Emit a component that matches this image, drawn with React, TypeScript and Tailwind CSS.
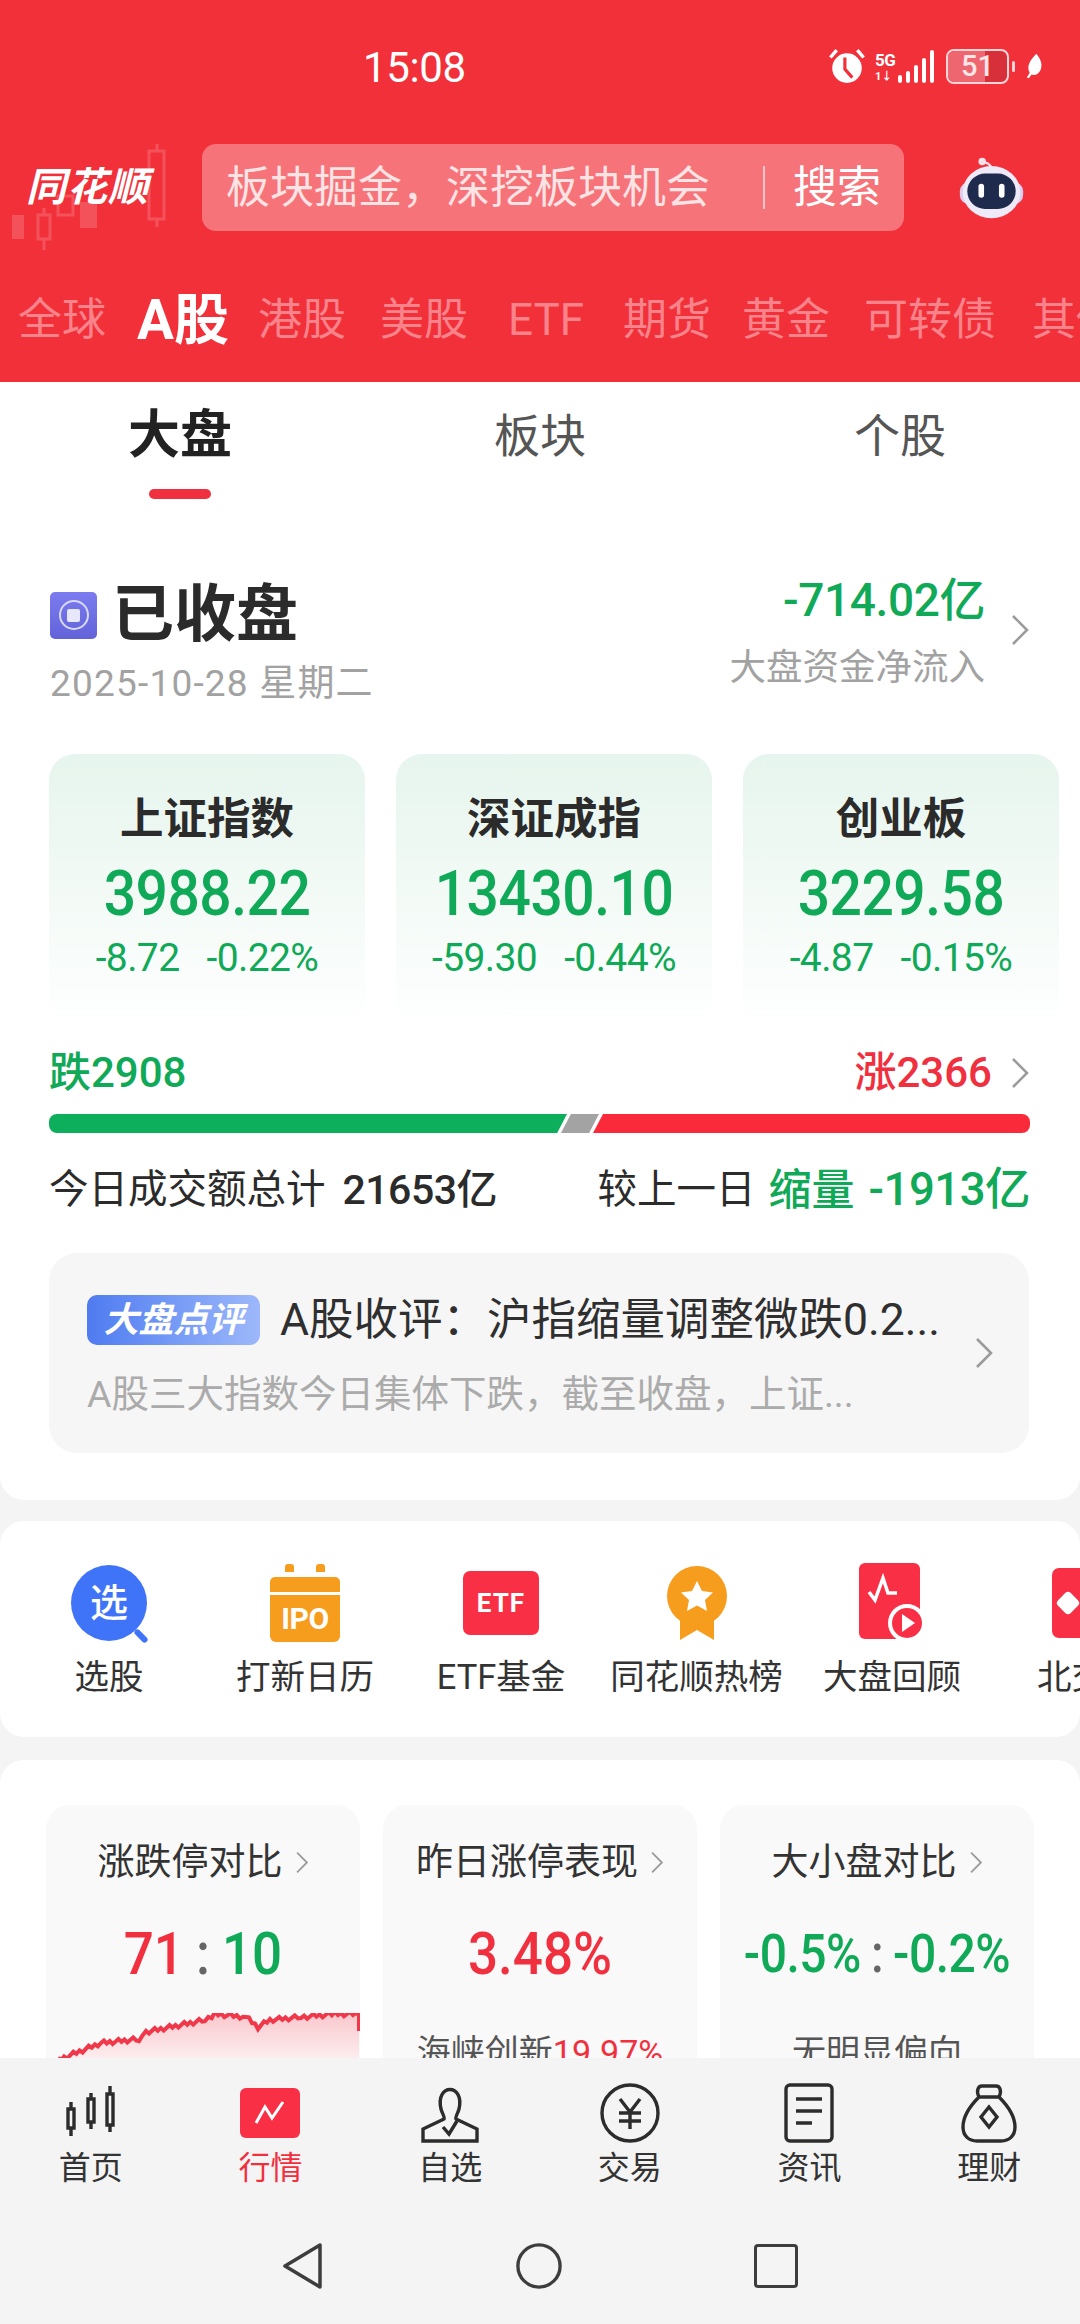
import type { ReactNode } from "react";

const FONT = "font-['Roboto','Noto_Sans_CJK_SC',sans-serif]";

const INDEXES = [
  { name: "上证指数", value: "3988.22", change: "-8.72", pct: "-0.22%" },
  { name: "深证成指", value: "13430.10", change: "-59.30", pct: "-0.44%" },
  { name: "创业板", value: "3229.58", change: "-4.87", pct: "-0.15%" },
];

function Chevron({ className = "" }: { className?: string }) {
  return (
    <svg viewBox="0 0 20 32" fill="none" stroke="#9b9b9b" strokeWidth="2.6" className={className}>
      <path d="M3 2l14 14L3 30" />
    </svg>
  );
}

function StatusIcons() {
  return (
    <div className="ml-auto mr-[37px] flex items-center">
      <svg viewBox="0 0 36 36" className="h-[38px] w-[38px]" fill="#fff">
        <circle cx="18" cy="20" r="14" />
        <path d="M1 9l6-7 2.500 2-6 7zM35 9l-6-7-2.500 2 6 7z" />
        <path d="M16 10v11l7 8" stroke="#f1303a" strokeWidth="3" fill="none" />
      </svg>
      <div className="ml-[9px] flex h-[33px] w-[23px] flex-col text-white">
        <span className="text-[17px] leading-[20px] font-bold tracking-[-0.5px]">5G</span>
        <span className="text-[11px] leading-[13px] font-bold">1↓</span>
      </div>
      <div className="flex h-[33px] items-end gap-[4px]">
        <span className="h-[8px] w-[4px] rounded-full bg-white" />
        <span className="h-[12px] w-[4px] rounded-full bg-white" />
        <span className="h-[18px] w-[4px] rounded-full bg-white" />
        <span className="h-[25px] w-[4px] rounded-full bg-white" />
        <span className="h-[33px] w-[4px] rounded-full bg-white" />
      </div>
      <div className="relative ml-[12px] flex h-[35px] w-[63px] items-center justify-center overflow-hidden rounded-[8px] border-2 border-[#ffd5d7] bg-[#d8303a]">
        <span className="absolute inset-y-0 left-0 w-[37px] bg-[#ee6670]" />
        <span className="relative text-[29px] leading-none font-medium text-[#ffe6e7]">51</span>
      </div>
      <span className="ml-[3px] h-[11px] w-[3px] rounded-full bg-[#ffd5d7]" />
      <svg viewBox="0 0 20 28" className="ml-[9px] h-[28px] w-[19px]" fill="#fff">
        <path d="M13 1c5 6 7 12 4 18-2 4-6 5-9 4l-3 4-2-1 3-5C2 14 7 7 13 1z" />
      </svg>
    </div>
  );
}

function Logo() {
  return (
    <div className="relative h-full w-[202px] shrink-0">
      <svg viewBox="0 0 170 110" className="absolute top-0 left-0 h-[110px] w-[170px]" fill="none" stroke="#f4525b" strokeWidth="3">
        <path d="M157 0v8M157 75v8M149 7h15v68h-15z" />
        <path d="M44 64v7M44 95v11M38 71h12v24H38z" />
        <path d="M58 52h15v19H58z" />
        <path d="M80 58h17v26H80zM12 71h12v24H12z" fill="#f4525b" stroke="none" />
      </svg>
      <span className="absolute top-[21px] left-[26px] text-[40px] leading-[46px] font-bold tracking-[1px] text-white italic">
        同花顺
      </span>
    </div>
  );
}

function Robot() {
  return (
    <svg viewBox="0 0 72 72" className="ml-[54px] h-[67px] w-[67px] shrink-0">
      <path d="M36 18c0-6-3-8-7-9" fill="none" stroke="#f4d8e0" strokeWidth="2.5" />
      <circle cx="26" cy="8" r="4" fill="#f5e3e8" />
      <rect x="2" y="30" width="68" height="24" rx="10" fill="#d9cff0" />
      <ellipse cx="36" cy="41" rx="31" ry="28" fill="#efeaf8" />
      <rect x="10" y="21" width="52" height="38" rx="19" fill="#1f2b4d" />
      <rect x="22" y="32" width="6" height="15" rx="3" fill="#fff" />
      <rect x="44" y="32" width="6" height="15" rx="3" fill="#fff" />
    </svg>
  );
}

function Header() {
  return (
    <header className="flex h-[382px] shrink-0 flex-col overflow-hidden bg-[#f1303a]">
      <div className="flex h-[132px] shrink-0 items-center text-white">
        <span className="mt-[3px] ml-[363px] text-[42px] leading-none tracking-[-0.4px]">15:08</span>
        <StatusIcons />
      </div>
      <div className="mt-[12px] flex h-[87px] shrink-0 items-center">
        <Logo />
        <div className="flex h-[87px] w-[702px] shrink-0 items-center rounded-[14px] bg-[#f6737a] pr-[23px] pl-[24px] text-[44px] leading-none text-[#fde3e4]">
          <span>板块掘金，深挖板块机会</span>
          <span className="ml-auto h-[43px] w-[2px] bg-[#fbc5c8]" />
          <span className="ml-[28px] text-white">搜索</span>
        </div>
        <Robot />
      </div>
      <nav className="mt-[57px] flex h-[64px] shrink-0 items-center whitespace-nowrap text-[44px] leading-none text-[#f8838a]">
        <span className="ml-[18px] w-[88px] shrink-0">全球</span>
        <span className="ml-[31px] w-[94px] shrink-0 text-[55px] font-bold text-white">A股</span>
        <span className="ml-[27px] shrink-0">港股</span>
        <span className="ml-[34px] shrink-0">美股</span>
        <span className="ml-[40px] shrink-0">ETF</span>
        <span className="ml-[39px] shrink-0">期货</span>
        <span className="ml-[31px] shrink-0">黄金</span>
        <span className="ml-[34px] shrink-0">可转债</span>
        <span className="ml-[36px] shrink-0">其他</span>
      </nav>
    </header>
  );
}

function IndexCard({ name, value, change, pct }: (typeof INDEXES)[number]) {
  return (
    <div className="flex h-[276px] w-[316px] flex-col items-center rounded-[26px] bg-gradient-to-b from-[#e6f5ed] to-[#ffffff] pt-[41px]">
      <div className="text-[43.5px] leading-[50px] font-bold text-[#2b2b2b]">{name}</div>
      <div className="mt-[19px] origin-center scale-y-[1.12] text-[57px] leading-[60px] font-medium tracking-[-0.5px] text-[#0fa958]">
        {value}
      </div>
      <div className="mt-[14px] flex gap-[27px] text-[39px] leading-[40px] tracking-[-0.6px] text-[#0fa958]">
        <span>{change}</span>
        <span>{pct}</span>
      </div>
    </div>
  );
}

function AdvanceBar() {
  return (
    <div className="mt-[21px] flex h-[19px] w-[981px]">
      <div className="h-full w-[518px] shrink-0 rounded-l-[8px] bg-[#0daf5c] [clip-path:polygon(0_0,100%_0,98.1%_100%,0_100%)]" />
      <div className="-ml-[6px] h-full w-[38px] shrink-0 bg-[#a3a3a3] [clip-path:polygon(26%_0,100%_0,74%_100%,0_100%)]" />
      <div className="-ml-[6px] h-full flex-1 rounded-r-[8px] bg-[#fb2a3a] [clip-path:polygon(10px_0,100%_0,100%_100%,0_100%)]" />
    </div>
  );
}

function MarketCard() {
  return (
    <section className="h-[1118px] shrink-0 rounded-b-[24px] bg-white">
      <div className="grid h-[120px] grid-cols-3 text-[46px] leading-none text-[#555]">
        <div className="flex flex-col items-center pt-[24px]">
          <span className="flex h-[60px] items-center text-[52px] font-bold text-[#222]">大盘</span>
          <span className="mt-[23px] h-[10px] w-[62px] rounded-full bg-[#f1303f]" />
        </div>
        <div className="flex justify-center pt-[24px]">
          <span className="flex h-[60px] items-center">板块</span>
        </div>
        <div className="flex justify-center pt-[24px]">
          <span className="flex h-[60px] items-center">个股</span>
        </div>
      </div>
      <div className="pl-[49px]">
        <div className="flex h-[252px] w-[981px] items-start pt-[71px]">
          <div className="flex flex-col">
            <div className="mt-[10px] flex h-[64px] items-center">
              <div className="ml-[1px] flex h-[47px] w-[47px] items-center justify-center rounded-[5px] bg-gradient-to-b from-[#7c7cf0] to-[#6263d8]">
                <div className="flex h-[30px] w-[30px] items-center justify-center rounded-full border-2 border-[#d9d9fb]">
                  <span className="h-[13px] w-[13px] rounded-[2px] bg-[#e8e8fd]" />
                </div>
              </div>
              <span className="ml-[15px] text-[62px] leading-none font-bold text-[#2b2b2b]">已收盘</span>
            </div>
            <span className="mt-[17px] ml-[1px] text-[37px] leading-[40px] tracking-[1.2px] text-[#a2a2a2]">2025-10-28 星期二</span>
          </div>
          <div className="ml-auto flex flex-col items-end">
            <span className="mt-[1px] text-[46px] leading-[52px] font-medium tracking-[-0.4px] text-[#0fa958]">-714.02亿</span>
            <span className="mt-[21px] text-[36.5px] leading-[42px] text-[#a2a2a2]">大盘资金净流入</span>
          </div>
          <Chevron className="mt-[41px] ml-[25px] h-[32px] w-[20px] shrink-0" />
        </div>
        <div className="flex gap-[31px]">
          {INDEXES.map((item) => (
            <IndexCard key={item.name} {...item} />
          ))}
        </div>
        <div className="mt-[23px] flex h-[40px] w-[981px] items-center text-[42px] leading-none font-medium">
          <span className="text-[#0fa958]">跌2908</span>
          <span className="ml-auto text-[#f1303f]">涨2366</span>
          <Chevron className="ml-[18px] h-[32px] w-[20px] shrink-0" />
        </div>
        <AdvanceBar />
        <div className="mt-[33px] flex h-[48px] w-[981px] items-center text-[39.5px] leading-none text-[#2b2b2b]">
          <span>今日成交额总计</span>
          <span className="ml-[17px] text-[41px] font-medium tracking-[-0.5px]">21653亿</span>
          <span className="ml-auto">较上一日</span>
          <span className="ml-[13px] text-[43px] font-medium text-[#0fa958]">缩量</span>
          <span className="ml-[14px] text-[45.5px] font-medium tracking-[-0.5px] text-[#0fa958]">-1913亿</span>
        </div>
        <div className="mt-[39px] flex h-[200px] w-[980px] items-center rounded-[28px] bg-[#f6f6f6] pr-[35px] pl-[38px]">
          <div className="mt-[6px] min-w-0 flex-1">
            <div className="flex h-[50px] items-center">
              <span className="flex h-[50px] w-[173px] shrink-0 items-center justify-center rounded-[10px] bg-gradient-to-r from-[#4f7bf0] to-[#9db8fa] text-[35px] leading-none font-bold text-white italic">
                大盘点评
              </span>
              <span className="ml-[20px] text-[44.5px] leading-none whitespace-nowrap text-[#2f2f2f]">A股收评：沪指缩量调整微跌0.2...</span>
            </div>
            <div className="mt-[26px] text-[37.5px] leading-[46px] whitespace-nowrap text-[#ababab]">A股三大指数今日集体下跌，截至收盘，上证...</div>
          </div>
          <Chevron className="ml-[8px] h-[32px] w-[20px] shrink-0" />
        </div>
      </div>
    </section>
  );
}

function Shortcut({ icon, label, className }: { icon: ReactNode; label: string; className: string }) {
  return (
    <div className={`flex shrink-0 flex-col items-center ${className}`}>
      <div className="flex h-[84px] items-center justify-center">{icon}</div>
      <span className="mt-[11px] text-[34.5px] leading-[42px] whitespace-nowrap text-[#333]">{label}</span>
    </div>
  );
}

function Shortcuts() {
  return (
    <section className="mt-[21px] flex h-[216px] shrink-0 overflow-hidden rounded-[24px] bg-white pt-[40px]">
      <Shortcut
        className="ml-[13px] w-[192px]"
        label="选股"
        icon={
          <div className="relative flex h-[76px] w-[76px] items-center justify-center rounded-full bg-[#3f74f8] text-[38px] leading-none font-medium text-white">
            选<span className="absolute right-[-2px] bottom-[2px] h-[6px] w-[16px] rotate-45 rounded-full bg-[#3f74f8]" />
          </div>
        }
      />
      <Shortcut
        className="ml-[2px] w-[196px]"
        label="打新日历"
        icon={
          <div className="relative flex h-[78px] w-[70px] flex-col justify-end">
            <div className="absolute top-0 left-[15px] h-[8px] w-[9px] rounded-t-[3px] bg-[#f79d1d]" />
            <div className="absolute top-0 right-[15px] h-[8px] w-[9px] rounded-t-[3px] bg-[#f79d1d]" />
            <div className="h-[15px] shrink-0 rounded-t-[5px] bg-[#f79d1d]" />
            <div className="flex h-[50px] shrink-0 items-center justify-center rounded-b-[6px] border-t-[3px] border-white bg-[#f79d1d] text-[30px] leading-none font-bold tracking-[-0.5px] text-white">IPO</div>
          </div>
        }
      />
      <Shortcut
        className="w-[196px]"
        label="ETF基金"
        icon={
          <div className="flex h-[64px] w-[76px] items-center justify-center rounded-[7px] bg-[#f92f45] text-[26px] leading-none font-bold tracking-[1px] text-white">ETF</div>
        }
      />
      <Shortcut
        className="w-[195px]"
        label="同花顺热榜"
        icon={
          <svg viewBox="0 0 62 74" className="h-[74px] w-[62px]">
            <path d="M14 44v30l17-10 17 10V44z" fill="#f79d1d" />
            <circle cx="31" cy="30" r="30" fill="#f79d1d" />
            <path d="M31 15l5 10 11 1.500-8 7.500 2 11-10-5.500-10 5.500 2-11-8-7.500 11-1.500z" fill="#fff" />
          </svg>
        }
      />
      <Shortcut
        className="w-[196px]"
        label="大盘回顾"
        icon={
          <svg viewBox="0 0 70 80" className="h-[80px] w-[70px]">
            <rect x="2" y="0" width="61" height="76" rx="6" fill="#f92f45" />
            <path d="M12 29l6 8 8-22 5 15h9" fill="none" stroke="#fff" strokeWidth="3.500" />
            <circle cx="50" cy="60" r="19" fill="#fff" />
            <circle cx="50" cy="60" r="15" fill="#f92f45" />
            <path d="M45 51l13 9-13 9z" fill="#fff" />
          </svg>
        }
      />
      <Shortcut
        className="ml-[47px] w-[100px] items-start"
        label="北交所"
        icon={
          <div className="ml-[15px] flex h-[70px] w-[76px] items-center rounded-[7px] bg-[#f92f45] pl-[7px]">
            <span className="h-[18px] w-[18px] rotate-45 rounded-[4px] bg-white" />
          </div>
        }
      />
    </section>
  );
}

const TREND = [
  [12, 47], [55, 30], [93, 26], [100, 19], [159, 7], [169, 1], [200, 4], [212, 14], [224, 7], [255, 4], [289, 1], [313, 1],
];

function buildTrend() {
  const out: [number, number][] = [];
  for (let i = 0; i < TREND.length - 1; i++) {
    const [x0, y0] = TREND[i];
    const [x1, y1] = TREND[i + 1];
    const steps = Math.max(2, Math.round((x1 - x0) / 3));
    for (let s = 0; s < steps; s++) {
      const t = s / steps;
      // small fixed jitter so the line looks like an intraday tick series
      const jitter = ((i * 7 + s * 13) % 5) - 2;
      out.push([x0 + (x1 - x0) * t, y0 + (y1 - y0) * t + jitter * 1.1]);
    }
  }
  out.push([313, 2]);
  return out;
}

function TrendChart() {
  const pts = buildTrend();
  const line = pts.map(([x, y]) => `${x.toFixed(1)},${y.toFixed(1)}`).join(" ");
  return (
    <svg viewBox="0 0 314 50" className="mt-[34px] h-[50px] w-[314px] shrink-0">
      <defs>
        <linearGradient id="trendFill" x1="0" y1="0" x2="0" y2="1">
          <stop offset="0" stopColor="#f9c6cb" />
          <stop offset="1" stopColor="#fdf1f2" />
        </linearGradient>
      </defs>
      <polygon points={`12,50 ${line} 313,18 313,50`} fill="url(#trendFill)" />
      <polyline points={`${line} 313,18`} fill="none" stroke="#f0384a" strokeWidth="4" />
    </svg>
  );
}

function StatCard({ title, children }: { title: string; children: ReactNode }) {
  return (
    <div className="flex h-[300px] w-[314px] shrink-0 flex-col items-center rounded-[24px] bg-[#f9f9f9] pt-[36px]">
      <div className="flex h-[42px] items-center text-[37px] leading-none text-[#333]">
        {title}
        <Chevron className="ml-[12px] h-[23px] w-[14px]" />
      </div>
      {children}
    </div>
  );
}

function LowerCards() {
  return (
    <section className="mt-[23px] h-[400px] shrink-0 rounded-t-[24px] bg-white pt-[45px] pl-[46px]">
      <div className="flex gap-[23px]">
        <StatCard title="涨跌停对比">
          <div className="mt-[46px] flex h-[50px] scale-y-[1.12] items-center text-[53px] leading-none font-medium">
            <span className="text-[#f1303f]">71</span>
            <span className="mx-[12px] text-[#666]">:</span>
            <span className="text-[#0fa958]">10</span>
          </div>
          <TrendChart />
        </StatCard>
        <StatCard title="昨日涨停表现">
          <div className="mt-[46px] flex h-[50px] scale-y-[1.12] items-center text-[53px] leading-none font-medium text-[#f1303f]">3.48%</div>
          <div className="mt-[53px] text-[34px] leading-[40px] text-[#555]">
            海峡创新<span className="text-[#f1303f]">19.97%</span>
          </div>
        </StatCard>
        <StatCard title="大小盘对比">
          <div className="mt-[46px] flex h-[50px] scale-y-[1.12] items-center text-[48px] leading-none font-medium tracking-[-0.5px] text-[#0fa958]">
            -0.5%<span className="mx-[10px] text-[#666]">:</span>-0.2%
          </div>
          <div className="mt-[53px] text-[34px] leading-[40px] text-[#555]">无明显偏向</div>
        </StatCard>
      </div>
    </section>
  );
}

function NavIcon({ name }: { name: string }) {
  const stroke = { fill: "none", stroke: "#2c2c2c", strokeWidth: 3.4 };
  if (name === "首页") {
    return (
      <svg viewBox="0 0 60 56" className="h-[56px] w-[60px]" {...stroke}>
        <path d="M10 24v-7M10 51v-8M7 24h6v19H7zM30 14v-6M30 44v-7M27 14h6v23h-6zM49 9V1M49 47v-7M46 9h6v31h-6z" />
      </svg>
    );
  }
  if (name === "行情") {
    return (
      <div className="flex h-[50px] w-[60px] items-center justify-center rounded-[6px] bg-[#f92f45]">
        <svg viewBox="0 0 32 26" className="h-[26px] w-[32px]" fill="none" stroke="#fff" strokeWidth="3">
          <path d="M2 23L11 7l7 11L29 2" />
        </svg>
      </div>
    );
  }
  if (name === "自选") {
    return (
      <svg viewBox="0 0 60 60" className="h-[60px] w-[60px]" {...stroke}>
        <path d="M21 26c-6-26 24-26 18 0-1 4-4 8-3 10l21 10v12H3V46l21-10c1-2-2-6-3-10z" />
        <path d="M23 44l6 7 8-13" />
      </svg>
    );
  }
  if (name === "交易") {
    return (
      <svg viewBox="0 0 60 60" className="h-[60px] w-[60px]" {...stroke}>
        <circle cx="30" cy="30" r="28" />
        <path d="M20 16l10 13 10-13M19 30h22M19 38h22M30 29v17" />
      </svg>
    );
  }
  if (name === "资讯") {
    return (
      <svg viewBox="0 0 50 60" className="h-[60px] w-[50px]" {...stroke}>
        <rect x="2" y="2" width="46" height="56" rx="4" />
        <path d="M12 16h26M12 28h26M12 40h16" />
      </svg>
    );
  }
  return (
    <svg viewBox="0 0 56 60" className="h-[60px] w-[56px]" {...stroke}>
      <path d="M18 14c-3-6-1-11 3-11h14c4 0 6 5 3 11M18 14h20c10 10 16 20 16 30 0 9-6 14-14 14H16C8 58 2 53 2 44c0-10 6-20 16-30z" />
      <path d="M28 24l8 10-8 10-8-10z" />
    </svg>
  );
}

function BottomNav() {
  return (
    <footer className="flex h-[266px] shrink-0 flex-col bg-[#f4f4f4]">
      <div className="mt-[22px] grid grid-cols-6 px-[1px]">
        {["首页", "行情", "自选", "交易", "资讯", "理财"].map((n) => (
          <div key={n} className="flex flex-col items-center">
            <div className="flex h-[66px] items-center justify-center">
              <NavIcon name={n} />
            </div>
            <span className={`mt-[3px] text-[32px] leading-[38px] ${n === "行情" ? "text-[#f1303f]" : "text-[#333]"}`}>{n}</span>
          </div>
        ))}
      </div>
      <div className="mt-[55px] flex items-center justify-center gap-[192px]">
        <svg viewBox="0 0 42 48" className="h-[48px] w-[42px]" fill="none" stroke="#3d3d3d" strokeWidth="3.500" strokeLinejoin="round">
          <path d="M38 3v42L3 24z" />
        </svg>
        <svg viewBox="0 0 48 48" className="h-[48px] w-[46px]" fill="none" stroke="#3d3d3d" strokeWidth="3.500">
          <circle cx="24" cy="24" r="22" />
        </svg>
        <div className="h-[44px] w-[44px] rounded-[4px] border-[3.5px] border-[#3d3d3d]" />
      </div>
    </footer>
  );
}

export default function App() {
  return (
    <div className={`flex h-[2324px] w-[1080px] flex-col overflow-hidden bg-[#f4f4f4] ${FONT}`}>
      <Header />
      <main className="flex min-h-0 flex-1 flex-col overflow-hidden">
        <MarketCard />
        <Shortcuts />
        <LowerCards />
      </main>
      <BottomNav />
    </div>
  );
}
